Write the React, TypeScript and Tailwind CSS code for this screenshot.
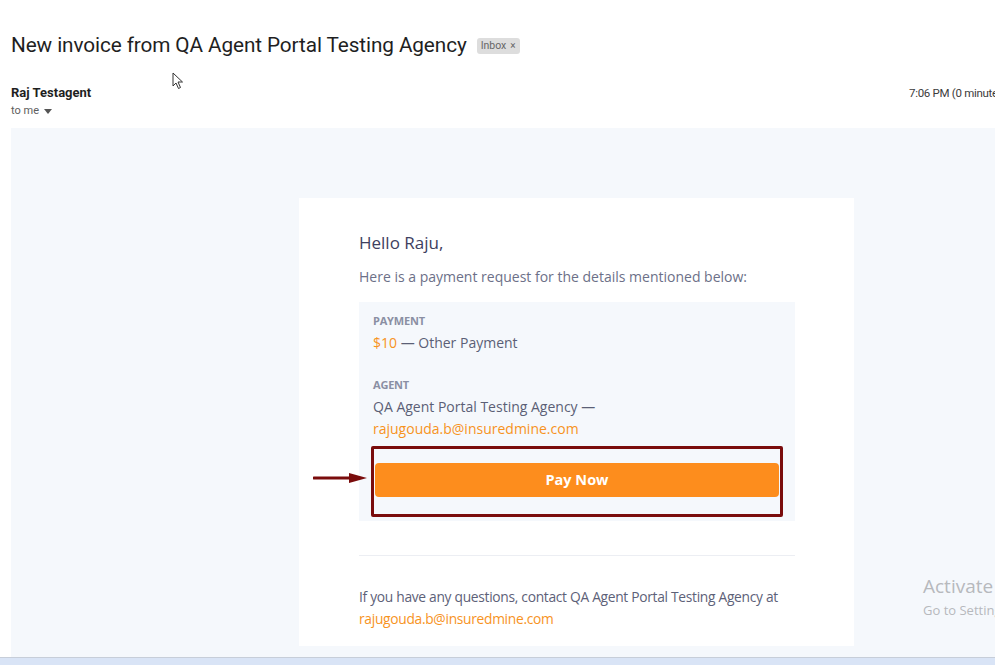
import React from "react";

const Header = () => {
  return (
    <div className="relative h-[128px] font-['Roboto',sans-serif]">
      {/* subject */}
      <div className="flex items-center pl-[11px] pt-[32px]">
        <h1 className="text-[20.75px] leading-[26px] text-[#1f1f1f] tracking-[-0.1px]">
          New invoice from QA Agent Portal Testing Agency
        </h1>
        <span className="ml-[10px] mt-[1px] flex h-[16px] items-center rounded-[3px] bg-[#dddddd] px-[4px] text-[10.5px] text-[#666]">
          Inbox <span className="ml-[4px] text-[10px]">×</span>
        </span>
      </div>

      {/* sender */}
      <div className="flex pl-[11px] pt-[26px] whitespace-nowrap">
        <div className="flex w-[898px] shrink-0 flex-col">
          <span className="text-[13px] leading-[18px] font-bold text-[#1f1f1f]">
            Raj Testagent
          </span>
          <span className="flex items-center text-[11px] leading-[18px] text-[#5e5e5e]">
            to me
            <svg width="8" height="5" viewBox="0 0 8 5" className="ml-[5px] mt-[1px]">
              <path d="M0 0h8L4 5z" fill="#555" />
            </svg>
          </span>
        </div>
        <span className="shrink-0 text-[11.5px] leading-[18px] text-[#3c3c3c] tracking-[-0.3px]">
          7:06 PM (0 minutes ago)
        </span>
      </div>

      {/* mouse cursor */}
      <svg
        className="absolute left-[172px] top-[72px]"
        width="12"
        height="18"
        viewBox="0 0 12 18"
      >
        <path
          d="M1 1v13l3-3 2.5 5.5 2-1L6 10h4.5z"
          fill="#fff"
          stroke="#333"
          strokeWidth="1"
          strokeLinejoin="round"
        />
      </svg>
    </div>
  );
};

const InvoiceCard = () => {
  return (
    <div className="ml-[288px] w-[555px] bg-white pl-[60px] pr-[59px] pt-[33px] pb-[16px] font-['Open_Sans',sans-serif]">
      <p className="text-[17px] leading-[24px] text-[#3d4060]">Hello Raju,</p>
      <p className="mt-[11px] text-[14px] leading-[22px] text-[#6c7088]">
        Here is a payment request for the details mentioned below:
      </p>

      {/* details box */}
      <div className="mt-[14px] bg-[#f5f8fc] pt-[12px] pb-[5px]">
        <div className="pl-[14px]">
          <p className="text-[11px] leading-[14px] font-bold text-[#8a8fa3] tracking-[-0.2px]">
            PAYMENT
          </p>
          <p className="mt-[4px] text-[14px] leading-[22px] text-[#5b5f76]">
            <span className="text-[#f7931e]">$10</span> — Other Payment
          </p>
          <p className="mt-[24px] text-[11px] leading-[14px] font-bold text-[#8a8fa3] tracking-[-0.2px]">
            AGENT
          </p>
          <p className="mt-[4px] text-[14px] leading-[22px] text-[#5b5f76]">
            QA Agent Portal Testing Agency —
          </p>
          <p className="text-[14px] leading-[22px] text-[#f7931e]">
            rajugouda.b@insuredmine.com
          </p>
        </div>

        <div className="relative px-[16px] pt-[23px] pb-[19px]">
          <button className="flex h-[34px] w-full items-center justify-center rounded-[4px] bg-[#fd8d1d] text-[14.5px] font-bold text-white">
            Pay Now
          </button>
          {/* annotation */}
          <div className="absolute left-[12px] right-[12px] top-[6px] bottom-[-1px] border-[3px] border-[#7a0c0c] rounded-[2px]" />
          <svg
            className="absolute left-[-46px] top-[32px]"
            width="56"
            height="12"
            viewBox="0 0 56 12"
          >
            <path d="M1 6h38" stroke="#7a0c0c" strokeWidth="3" strokeLinecap="round" />
            <path d="M36 1l18 5-18 5z" fill="#7a0c0c" />
          </svg>
        </div>
      </div>

      <div className="mt-[34px] h-px bg-[#eceef3]" />

      <p className="mt-[30px] text-[13.8px] leading-[22px] text-[#5d6178] tracking-[-0.3px]">
        If you have any questions, contact QA Agent Portal Testing Agency at
        <br />
        <span className="text-[#f7931e]">rajugouda.b@insuredmine.com</span>
      </p>
    </div>
  );
};

export default function App() {
  return (
    <div className="relative h-[665px] w-[995px] overflow-hidden bg-white">
      <Header />

      {/* message body */}
      <div className="ml-[11px] h-[529px] bg-[#f5f8fc] pt-[70px]">
        <InvoiceCard />
      </div>

      {/* taskbar edge */}
      <div className="h-px bg-[#c7ced9]" />
      <div className="h-[7px] bg-[#d9e4f6]" />

      {/* windows watermark */}
      <div className="absolute left-[923px] top-[577px] font-['Open_Sans',sans-serif] leading-none whitespace-nowrap">
        <p className="text-[19px] text-[#b7b9bd]">Activate Windows</p>
        <p className="mt-[8px] text-[13px] text-[#b7b9bd]">Go to Settings to activate Windows.</p>
      </div>
    </div>
  );
}
